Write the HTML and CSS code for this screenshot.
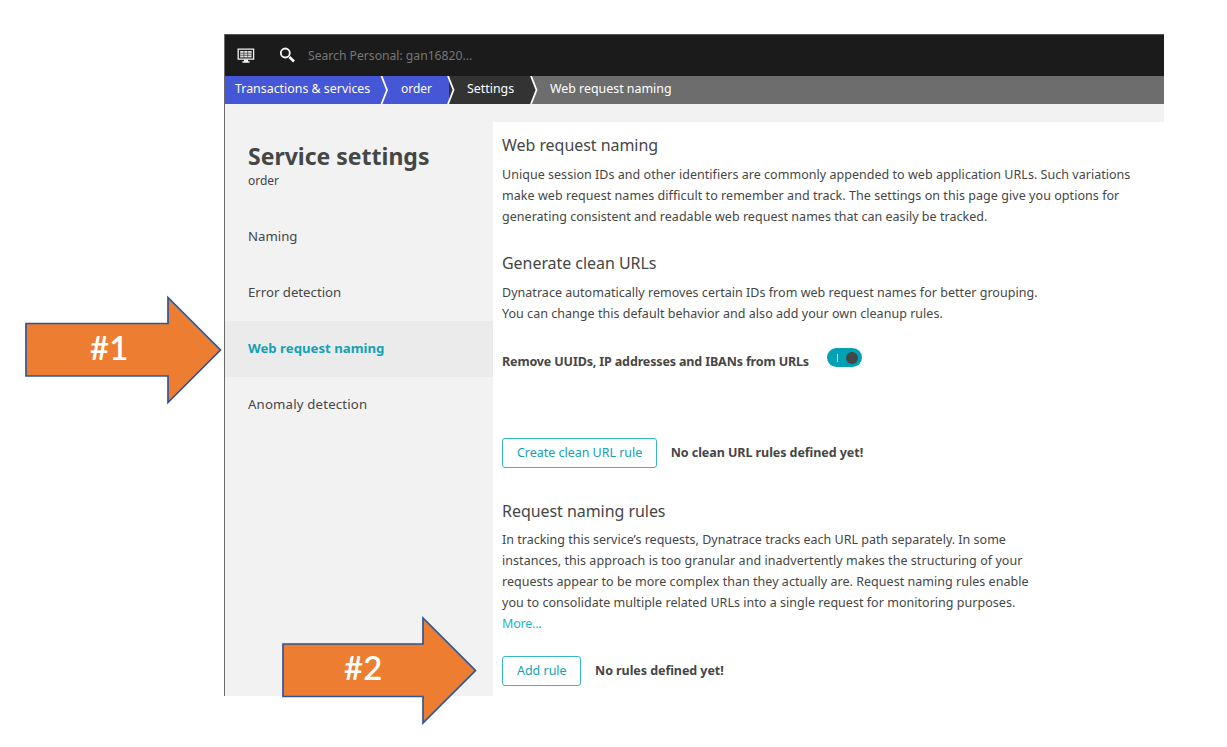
FILE: index.html
```html
<!DOCTYPE html>
<html lang="en">
<head>
<meta charset="utf-8">
<title>Service settings</title>
<link rel="stylesheet" href="styles.css">
</head>
<body>
<div class="app">
  <header class="topbar">
    <svg class="icon-screen" width="18" height="16" viewBox="0 0 18 16">
      <path d="M1.200 1.200h15.400v10H1.200z" fill="none" stroke="#f4f4f4" stroke-width="1.300"/>
      <path d="M3.200 3h11.400v6.400H3.200z" fill="#e4e4e4"/>
      <path d="M3.200 5.200h11.400M3.200 7.300h11.400M6.900 3v6.400M10.700 3v6.400" stroke="#1b1b1b" stroke-width=".6"/>
      <path d="M7 11.500h4v1.800h1.600v1.400H5.400v-1.400H7z" fill="#f4f4f4"/>
    </svg>
    <svg class="icon-search" width="17" height="17" viewBox="0 0 17 17">
      <circle cx="6.300" cy="6" r="4.500" fill="none" stroke="#f6f6f6" stroke-width="1.800"/>
      <path d="M10.400 10l4.600 4.500" stroke="#f6f6f6" stroke-width="2.600"/>
    </svg>
    <span class="search-text">Search Personal: gan16820...</span>
  </header>
  <nav class="crumbs">
    <a class="crumb crumb-root">Transactions &amp; services</a>
    <a class="crumb crumb-order">order</a>
    <a class="crumb crumb-settings">Settings</a>
    <a class="crumb crumb-current">Web request naming</a>
    <svg class="crumb-lines" width="940" height="28" viewBox="0 0 940 28">
      <path d="M223 0h83l5.500 14-5.500 14h-83l5.500-14z" fill="#333"/>
      <path d="M156.500 0l5.500 14-5.500 14M223 0l5.500 14-5.500 14M306 0l5.500 14-5.500 14" fill="none" stroke="#fff" stroke-width="1.800"/>
    </svg>
  </nav>
  <div class="body">
    <aside class="sidebar">
      <h1 class="title">Service settings</h1>
      <div class="entity">order</div>
      <ul class="menu">
        <li class="item">Naming</li>
        <li class="item">Error detection</li>
        <li class="item active">Web request naming</li>
        <li class="item item-wide">Anomaly detection</li>
      </ul>
    </aside>
    <main class="content">
      <h2 class="heading">Web request naming</h2>
      <p class="text">Unique session IDs and other identifiers are commonly appended to web application URLs. Such variations<br><span class="loose">make web request names difficult to remember and track. The settings on this page give you options for</span><br>generating consistent and readable web request names that can easily be tracked.</p>
      <h2 class="heading heading-clean">Generate clean URLs</h2>
      <p class="text">Dynatrace automatically removes certain IDs from web request names for better grouping.<br>You can change this default behavior and also add your own cleanup rules.</p>
      <div class="toggle-row">
        <span class="strong strong-tight">Remove UUIDs, IP addresses and IBANs from URLs</span>
        <span class="toggle"><span class="toggle-mark"></span><span class="toggle-knob"></span></span>
      </div>
      <div class="action action-clean"><button class="button">Create clean URL rule</button><span class="strong">No clean URL rules defined yet!</span></div>
      <h2 class="heading heading-rules">Request naming rules</h2>
      <p class="text"><span class="tight">In tracking this service’s requests, Dynatrace tracks each URL path separately. In some</span><br><span class="loose">instances, this approach is too granular and inadvertently makes the structuring of your</span><br>requests appear to be more complex than they actually are. Request naming rules enable<br>you to consolidate multiple related URLs into a single request for monitoring purposes.<br><a class="more">More...</a></p>
      <div class="action action-add"><button class="button">Add rule</button><span class="strong">No rules defined yet!</span></div>
    </main>
  </div>
</div>
<div class="arrow arrow-one">
  <svg width="200" height="112" viewBox="0 0 200 112"><path d="M3 30.500h142V4.500l52.500 52.500-52.500 52.500V83H3z"/></svg>
  <span class="arrow-label">#1</span>
</div>
<div class="arrow arrow-two">
  <svg width="200" height="112" viewBox="0 0 200 112"><path d="M3 31h140V5l52.500 52.500-52.500 52.500V83.500H3z"/></svg>
  <span class="arrow-label">#2</span>
</div>
</body>
</html>
```
FILE: styles.css
```css
* { box-sizing: border-box; }
body {
  margin: 0;
  width: 1227px;
  height: 747px;
  padding: 34px 0 0 224px;
  overflow: hidden;
  background: #fff;
  color: #454646;
  font: 12.5px/21px "Noto Sans", sans-serif;
}
h1, h2, p, ul { margin: 0; padding: 0; }
.app {
  width: 940px;
  height: 662px;
  display: flex;
  flex-direction: column;
  border-left: 1px solid #6a6a6a;
  background: #f2f2f2;
}
.topbar {
  height: 42px;
  display: flex;
  align-items: center;
  padding-left: 12px;
  background: #1b1b1b;
  border-top: 1px solid #555;
}
.icon-search { margin-left: 24px; }
.search-text { margin-left: 12px; color: #777; font-size: 12.2px; letter-spacing: -.02px; }
.crumbs {
  position: relative;
  height: 28px;
  display: flex;
  background: linear-gradient(90deg, #4556d7 0 224px, #333 224px 306px, #6d6d6d 306px);
}
.crumb { position: relative; z-index: 1; color: #fff; font-size: 12.4px; line-height: 26px; }
.crumb-root { margin-left: 10px; width: 166px; }
.crumb-order { width: 66px; font-size: 12px; }
.crumb-settings { width: 83px; }
.crumb-lines { position: absolute; left: 0; top: 0; }
.body { flex: 1; display: flex; }
.sidebar { width: 268px; padding-top: 37px; }
.title { padding-left: 23px; font-size: 23px; line-height: 30px; font-weight: 700; }
.entity { padding-left: 23px; font-size: 12px; line-height: 20px; }
.menu { margin-top: 18px; list-style: none; }
.item { height: 56px; padding-left: 23px; font-size: 13.2px; line-height: 55px; }
.item-wide { letter-spacing: .18px; }
.active { background: #ebebeb; color: #14a1b4; font-weight: 700; }
.content { flex: 1; margin-top: 18px; padding: 12px 0 0 9px; background: #fff; }
.heading { font-size: 16px; line-height: 22px; font-weight: 400; letter-spacing: -.05px; }
.heading-clean { margin-top: 25px; }
.heading-rules { margin-top: 32px; }
.text { margin-top: 8px; letter-spacing: .03px; white-space: nowrap; }
.heading-clean + .text { margin-top: 8px; }
.heading-rules + .text { margin-top: 7px; }
.loose { letter-spacing: .053px; }
.tight { letter-spacing: 0; }
.strong { font-weight: 700; letter-spacing: -.06px; }
.strong-tight { letter-spacing: -.139px; }
.toggle-row { display: flex; align-items: flex-start; margin-top: 24px; height: 24px; gap: 18px; }
.toggle-row .strong { padding-top: 3px; }
.toggle { display: flex; align-items: center; width: 35px; height: 19px; border-radius: 10px; background: #00a1b2; padding-left: 10px; }
.toggle-mark { width: 1px; height: 8px; background: #c4edf1; }
.toggle-knob { width: 12px; height: 12px; margin-left: 8px; border-radius: 50%; background: #454646; }
.action { display: flex; align-items: flex-start; gap: 14px; }
.action .strong { padding-top: 4px; }
.action-clean { margin-top: 66px; }
.action-add { margin-top: 22px; }
.button {
  height: 30px;
  padding: 0 13.500px 0 14px;
  border: 1px solid #35b7c5;
  border-radius: 3px;
  background: #fff;
  color: #14a1b4;
  font: 12.5px/28px "Noto Sans", sans-serif;
  letter-spacing: -.03px;
}
.more { color: #14b4cb; letter-spacing: -.2px; }
.arrow { position: absolute; width: 200px; height: 112px; }
.arrow svg { display: block; }
.arrow path { fill: #ed7d31; stroke: #2f5597; stroke-width: 1.7; }
.arrow-one { left: 23px; top: 293px; }
.arrow-two { left: 280px; top: 613px; }
.arrow-label { position: absolute; left: 67px; top: 34px; color: #fff; font: 600 33px/40px "Lato", sans-serif; }
.arrow-two .arrow-label { left: 64px; }
```
